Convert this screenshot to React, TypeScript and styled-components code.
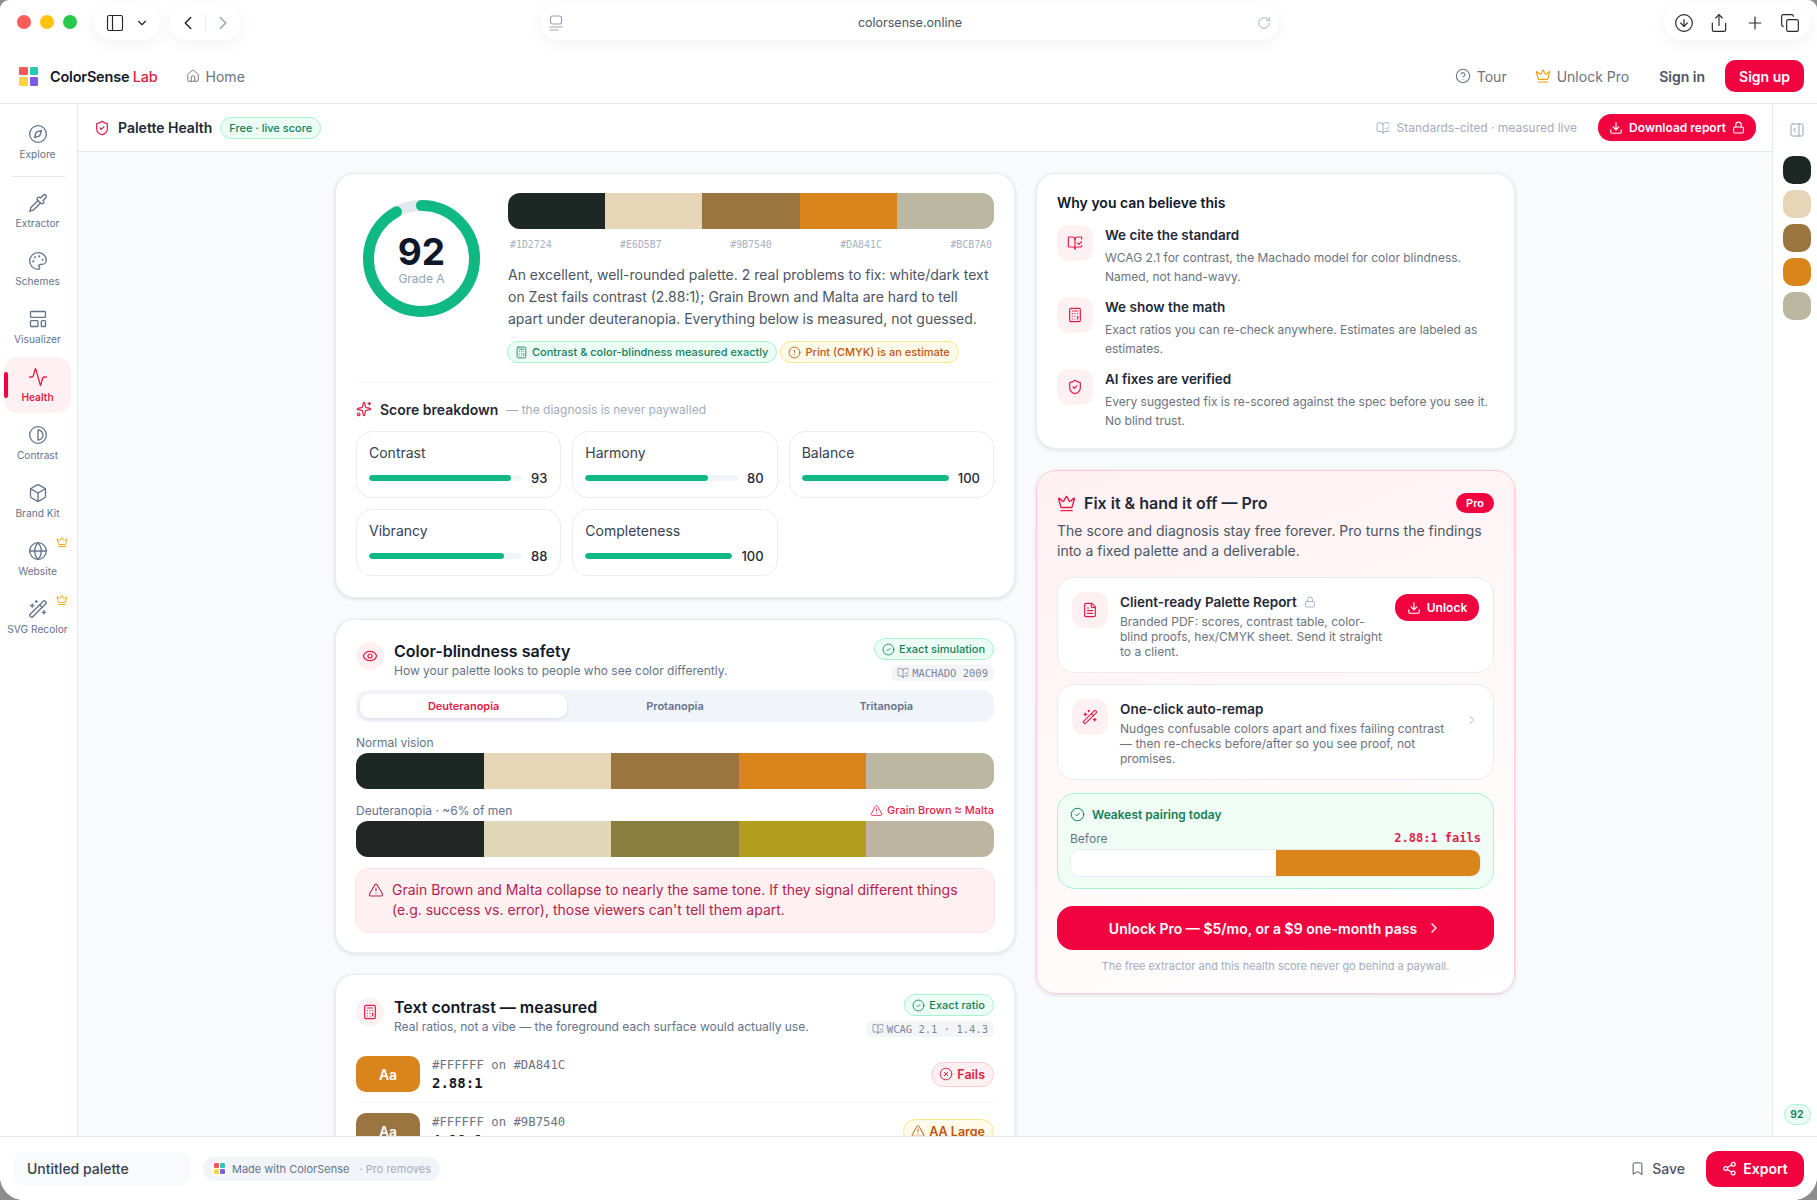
import React from "react";
import styled, { createGlobalStyle } from "styled-components";
import {
  Activity, BookOpenCheck, Bookmark, Box, Calculator, ChevronDown, ChevronLeft, ChevronRight,
  CircleAlert, CircleArrowDown, CircleCheck, CircleHelp, CircleX, Compass, Contrast, Copy,
  Crown, Download, Eye, FileText, Globe, House, LayoutTemplate, Lock, PanelLeft, PanelRightOpen,
  Palette, Pipette, Plus, RotateCw, Share, Share2, ShieldCheck, Sparkles, TriangleAlert, WandSparkles,
} from "lucide-react";

const RED = "#f0033f";
const ROSE = "#e11d48";
const GREEN_TEXT = "#15805a";
const MONO = `"DejaVu Sans Mono", "Liberation Mono", monospace`;

const palette = ["#1D2724", "#E6D5B7", "#9B7540", "#DA841C", "#BCB7A0"];
const simulated = ["#232625", "#E0D7B8", "#8B7D40", "#B09E1C", "#BDB5A0"];

const GlobalStyle = createGlobalStyle`
  html, body { margin: 0; height: 100%; background: #8d8d8d; }
  * { box-sizing: border-box; }
  body { font-family: Inter, "Noto Sans", sans-serif; color: #111827; overflow: hidden; }
  #root { height: 100%; }
`;

const Window = styled.div`
  height: 1200px;
  display: flex;
  flex-direction: column;
  background: #fff;
  overflow: hidden;
  border-radius: 9px 9px 24px 24px;
`;

/* browser chrome */
const Chrome = styled.div`
  height: 52px;
  flex: none;
  display: flex;
  align-items: flex-start;
  padding: 5px 7px 0 0;
  color: #27272a;
`;
const Lights = styled.div`
  display: flex;
  gap: 9px;
  padding: 10px 0 0 17px;
  width: 94px;
`;
const Light = styled.span<{ $c: string }>`
  width: 14px;
  height: 14px;
  border-radius: 50%;
  background: ${(p) => p.$c};
`;
const Pill = styled.div<{ $w: number }>`
  width: ${(p) => p.$w}px;
  height: 35px;
  flex: none;
  border-radius: 18px;
  background: #fff;
  box-shadow: 0 3px 16px rgba(0, 0, 0, 0.06);
  display: flex;
  align-items: center;
  justify-content: space-between;
  padding: 0 11px;
`;
const NavPill = styled(Pill)`
  margin-left: 10px;
  margin-right: 300px;
  padding: 0 7px;
`;
const UrlPill = styled(Pill)`
  font-size: 12.5px;
  color: #4b5563;
  padding: 0 8px;
`;
const ToolPill = styled(Pill)`
  margin-left: auto;
  padding: 0 10px;
`;
const Sep = styled.span`
  width: 1px;
  height: 18px;
  background: #eef0f3;
`;

/* app header */
const Header = styled.header`
  height: 52px;
  flex: none;
  display: flex;
  align-items: center;
  padding: 0 13px 3px 19px;
  border-bottom: 1px solid #e2e8f0;
`;
const LogoGrid = styled.div<{ $size: number }>`
  width: ${(p) => p.$size}px;
  height: ${(p) => p.$size}px;
  display: grid;
  grid-template-columns: 1fr 1fr;
  gap: ${(p) => (p.$size > 14 ? 2 : 1)}px;
`;
const LogoCell = styled.span<{ $c: string }>`
  background: ${(p) => p.$c};
  border-radius: 1px;
`;
const Brand = styled.div`
  margin-left: 12px;
  font-size: 14.5px;
  font-weight: 600;
  letter-spacing: -0.2px;
  color: #111827;
  span { color: ${ROSE}; font-weight: 500; }
`;
const HeadLink = styled.a<{ $strong?: boolean }>`
  display: flex;
  align-items: center;
  gap: 6px;
  font-size: 14px;
  font-weight: ${(p) => (p.$strong ? 600 : 400)};
  color: ${(p) => (p.$strong ? "#4b5563" : "#6b7280")};
  margin-left: ${(p) => (p.$strong ? "2px" : "0")};
`;
const HomeLink = styled(HeadLink)`
  margin-left: 28px;
`;
const HeadRight = styled.div`
  margin-left: auto;
  display: flex;
  align-items: center;
  gap: 28px;
`;
const SignUp = styled.button`
  height: 32px;
  width: 79px;
  margin-left: -8px;
  border: 0;
  border-radius: 10px;
  background: ${RED};
  color: #fff;
  font: 600 14px Inter, sans-serif;
`;

/* body */
const Body = styled.div`
  flex: 1;
  min-height: 0;
  display: flex;
`;
const Sidebar = styled.nav`
  width: 78px;
  flex: none;
  border-right: 1px solid #e2e8f0;
  padding: 10px 6px 0 4px;
  display: flex;
  flex-direction: column;
`;
const NavItem = styled.div<{ $active?: boolean }>`
  position: relative;
  height: 56px;
  margin-bottom: 2px;
  border-radius: 14px;
  display: flex;
  flex-direction: column;
  align-items: center;
  padding-top: 10px;
  gap: 3px;
  font-size: 10.2px;
  line-height: 14px;
  white-space: nowrap;
  font-weight: ${(p) => (p.$active ? 600 : 400)};
  background: ${(p) => (p.$active ? "#fff1f3" : "transparent")};
  color: ${(p) => (p.$active ? ROSE : "#64748b")};
  svg { flex: none; }
`;
const ActiveBar = styled.span`
  position: absolute;
  left: 0;
  top: 15px;
  bottom: 15px;
  width: 4px;
  border-radius: 3px;
  background: ${RED};
`;
const ProMark = styled.span`
  position: absolute;
  right: 3px;
  top: 5px;
  display: flex;
  color: #f59e0b;
`;
const NavDivider = styled.div`
  height: 1px;
  margin: 4px 6px 6px 8px;
  background: #e2e8f0;
`;
const Center = styled.div`
  flex: 1;
  min-width: 0;
  display: flex;
  flex-direction: column;
  background: #f8fafc;
`;
const SubHeader = styled.div`
  height: 48px;
  flex: none;
  display: flex;
  align-items: center;
  padding: 0 16px 0 16px;
  background: #fff;
  border-bottom: 1px solid #e2e8f0;
`;
const SubTitle = styled.h1`
  margin: 0 8px 0 8px;
  font-size: 14px;
  font-weight: 600;
  color: #1f2937;
`;
const Badge = styled.span<{ $tone: "green" | "amber" | "red" }>`
  display: inline-flex;
  align-items: center;
  gap: 4px;
  height: 22px;
  padding: 0 8px;
  flex: none;
  border-radius: 11px;
  font-size: 11px;
  font-weight: 500;
  white-space: nowrap;
  border: 1px solid ${(p) => ({ green: "#a7f3d0", amber: "#fde68a", red: "#fecdd3" })[p.$tone]};
  background: ${(p) => ({ green: "#ecfdf5", amber: "#fffbeb", red: "#fff1f2" })[p.$tone]};
  color: ${(p) => ({ green: GREEN_TEXT, amber: "#c2540c", red: ROSE })[p.$tone]};
  &:has(svg) { padding: 0 8px 0 7px; }
`;
const SubNote = styled.div`
  margin-left: auto;
  display: flex;
  align-items: center;
  gap: 7px;
  font-size: 12px;
  color: #a3acbd;
`;
const RedButton = styled.button`
  display: inline-flex;
  align-items: center;
  justify-content: center;
  gap: 6px;
  border: 0;
  background: ${RED};
  color: #fff;
  font-family: Inter, sans-serif;
  font-weight: 600;
  white-space: nowrap;
`;
const DownloadButton = styled(RedButton)`
  margin-left: 21px;
  width: 158px;
  height: 27px;
  border-radius: 13px;
  font-size: 12px;
`;
const Scroll = styled.main`
  flex: 1;
  min-height: 0;
  overflow: hidden;
  padding-top: 21px;
  display: grid;
  grid-template-columns: 680px 479px;
  gap: 21px;
  justify-content: center;
  align-items: start;
`;
const Column = styled.div`
  display: flex;
  flex-direction: column;
  gap: 21px;
`;
const Card = styled.section<{ $pad?: string }>`
  background: #fff;
  border: 1px solid #e8edf3;
  border-radius: 20px;
  padding: ${(p) => p.$pad ?? "19px 20px"};
  box-shadow: 0 1px 4px rgba(15, 23, 42, 0.12);
`;

/* score card */
const ScoreTop = styled.div`
  display: flex;
  gap: 21px;
`;
const RingWrap = styled.div`
  position: relative;
  width: 131px;
  height: 124px;
  flex: none;
  padding: 7px 0 0 7px;
`;
const RingText = styled.div`
  position: absolute;
  left: 0;
  right: 0;
  top: 37px;
  display: flex;
  flex-direction: column;
  align-items: center;
  color: #0f172a;
  strong { font-size: 37px; line-height: 44px; font-weight: 700; }
  span { font-size: 12px; line-height: 16px; margin-top: -3px; color: #94a3b8; }
`;
const ScoreInfo = styled.div`
  flex: 1;
  min-width: 0;
`;
const Strip = styled.div`
  height: 36px;
  display: flex;
  border-radius: 12px;
  overflow: hidden;
`;
const Chip = styled.span<{ $c: string }>`
  flex: 1;
  background: ${(p) => p.$c};
`;
const HexRow = styled.div`
  display: flex;
  justify-content: space-between;
  padding: 0 2px;
  margin-top: 10px;
  font-family: ${MONO};
  font-size: 9.9px;
  line-height: 12px;
  color: #aab2c0;
`;
const Summary = styled.p`
  margin: 13px 0 0;
  font-size: 14px;
  line-height: 22px;
  color: #4b5563;
`;
const Chips = styled.div`
  display: flex;
  gap: 3px;
  margin: 11px 0 0 -1px;
`;
const Rule = styled.div`
  height: 1px;
  margin-top: 19px;
  background: #f1f5f9;
`;
const BreakHead = styled.div`
  display: flex;
  align-items: center;
  gap: 8px;
  margin-top: 16px;
  height: 20px;
  font-size: 14px;
  font-weight: 600;
  color: #1f2937;
`;
const BreakNote = styled.span`
  font-size: 12px;
  font-weight: 400;
  color: #a3acbd;
`;
const ScoreGrid = styled.div`
  display: grid;
  grid-template-columns: repeat(3, 1fr);
  gap: 11px 11px;
  margin-top: 12px;
`;
const ScoreCell = styled.div`
  height: 67px;
  border: 1px solid #e8edf3;
  border-radius: 16px;
  padding: 12px 13px 12px 12px;
  font-size: 14px;
  line-height: 18px;
  color: #374151;
`;
const BarRow = styled.div`
  display: flex;
  align-items: center;
  gap: 9px;
  margin-top: 7px;
  font-size: 13px;
  font-weight: 500;
  color: #1f2937;
`;
const Track = styled.div`
  flex: 1;
  height: 6px;
  border-radius: 3px;
  background: #f1f5f9;
  overflow: hidden;
`;
const Fill = styled.div`
  height: 100%;
  border-radius: 3px;
  background: #10b981;
`;

/* section head */
const SectionHead = styled.div`
  display: flex;
  justify-content: space-between;
  gap: 10px;
`;
const SectionLeft = styled.div`
  display: flex;
  gap: 10px;
  padding-top: 3px;
`;
const IconTile = styled.div<{ $size?: number }>`
  width: ${(p) => p.$size ?? 28}px;
  height: ${(p) => p.$size ?? 28}px;
  flex: none;
  display: flex;
  align-items: center;
  justify-content: center;
  border-radius: ${(p) => ((p.$size ?? 28) > 30 ? 12 : 14)}px;
  background: #fff1f3;
  color: ${ROSE};
`;
const SectionTile = styled(IconTile)`
  margin-top: 1px;
`;
const SectionTitle = styled.h2`
  margin: 0;
  font-size: 16px;
  line-height: 20px;
  font-weight: 600;
  color: #111827;
`;
const SectionSub = styled.p`
  margin: 1px 0 0;
  font-size: 12px;
  line-height: 18px;
  color: #64748b;
`;
const Meta = styled.div`
  display: flex;
  flex-direction: column;
  align-items: flex-end;
  gap: 5px;
`;
const Cite = styled.span`
  display: inline-flex;
  align-items: center;
  gap: 3px;
  height: 16px;
  padding: 0 6px;
  border-radius: 6px;
  background: #f3f5f8;
  font-family: ${MONO};
  font-size: 10.5px;
  color: #7c8698;
`;
const Tabs = styled.div`
  display: grid;
  grid-template-columns: repeat(3, 1fr);
  height: 32px;
  padding: 4px 2px;
  margin-top: 9px;
  border-radius: 12px;
  background: #f1f5f9;
`;
const Tab = styled.div<{ $active?: boolean }>`
  display: flex;
  align-items: center;
  justify-content: center;
  margin: 0 2px;
  border-radius: 9px;
  font-size: 11px;
  font-weight: 600;
  color: ${(p) => (p.$active ? ROSE : "#64748b")};
  background: ${(p) => (p.$active ? "#fff" : "transparent")};
  box-shadow: ${(p) => (p.$active ? "0 1px 3px rgba(15,23,42,.12)" : "none")};
`;
const StripLabel = styled.div<{ $top?: number }>`
  display: flex;
  justify-content: space-between;
  align-items: center;
  height: 16px;
  margin: ${(p) => p.$top ?? 12}px 0 3px;
  font-size: 12px;
  color: #64748b;
`;
const ClashNote = styled.span`
  display: inline-flex;
  align-items: center;
  gap: 4px;
  font-size: 11px;
  font-weight: 500;
  color: ${ROSE};
`;
const Alert = styled.div`
  display: flex;
  gap: 8px;
  margin-top: 11px;
  margin-inline: -1px;
  padding: 11px 12px 12px;
  border: 1px solid #ffe4e6;
  border-radius: 14px;
  background: #fff1f2;
  font-size: 14px;
  line-height: 20px;
  color: #b4234e;
  svg { flex: none; margin-top: 2px; }
`;
const RatioRow = styled.div<{ $first?: boolean }>`
  display: flex;
  align-items: center;
  gap: 12px;
  padding: 10px 0;
  margin-top: ${(p) => (p.$first ? "9px" : "0")};
  border-bottom: 1px solid #f1f5f9;
`;
const AaTile = styled.div<{ $c: string }>`
  width: 64px;
  height: 36px;
  flex: none;
  border-radius: 10px;
  display: flex;
  align-items: center;
  justify-content: center;
  background: ${(p) => p.$c};
  color: #fff;
  font-size: 14px;
  font-weight: 600;
`;
const RatioText = styled.div`
  flex: 1;
  font-family: ${MONO};
  font-size: 12.3px;
  line-height: 17px;
  color: #6b7280;
  strong { display: block; font-size: 14px; line-height: 18px; font-weight: 600; color: #111827; }
`;
const GradeBadge = styled(Badge)`
  height: 25px;
  border-radius: 13px;
  font-size: 12.5px;
  font-weight: 600;
`;

/* right column */
const WhyTitle = styled.h3`
  margin: 0 0 12px;
  font-size: 14px;
  line-height: 20px;
  font-weight: 600;
  color: #111827;
`;
const WhyList = styled.div`
  display: flex;
  flex-direction: column;
  gap: 11px;
`;
const WhyRow = styled.div`
  display: flex;
  gap: 12px;
`;
const RowTitle = styled.div`
  font-size: 13.5px;
  line-height: 20px;
  font-weight: 600;
  color: #1f2937;
  display: flex;
  align-items: center;
  gap: 7px;
`;
const WhyText = styled.p`
  margin: 3px 0 0;
  font-size: 12px;
  line-height: 19px;
  color: #6b7280;
`;
const ProCard = styled(Card)`
  border-color: #fecdd3;
  background: linear-gradient(160deg, #fff1f3 0%, #fff7f8 45%, #ffffff 100%);
`;
const ProHead = styled.div`
  display: flex;
  align-items: center;
  gap: 8px;
  height: 24px;
  margin-top: 1px;
  color: ${ROSE};
`;
const ProTitle = styled.h3`
  margin: 0;
  flex: 1;
  font-size: 16px;
  font-weight: 600;
  color: #1f2937;
`;
const ProTag = styled.span`
  width: 38px;
  height: 20px;
  border-radius: 10px;
  background: ${RED};
  color: #fff;
  font-size: 11px;
  font-weight: 600;
  display: flex;
  align-items: center;
  justify-content: center;
`;
const ProText = styled.p`
  margin: 6px 0 16px;
  font-size: 14px;
  line-height: 20px;
  color: #4b5563;
`;
const Offer = styled.div`
  height: 96px;
  display: flex;
  gap: 12px;
  padding: 14px;
  margin-bottom: 11px;
  border: 1px solid #e8edf3;
  border-radius: 18px;
  background: #fff;
`;
const OfferBody = styled.div`
  flex: 1;
  min-width: 0;
`;
const OfferText = styled.p`
  margin: 2px 0 0;
  font-size: 12px;
  line-height: 15px;
  color: #6b7280;
`;
const UnlockButton = styled(RedButton)`
  width: 84px;
  height: 27px;
  margin: 2px 0 0 -2px;
  flex: none;
  border-radius: 13px;
  font-size: 12px;
`;
const OfferChevron = styled.div`
  flex: none;
  color: #cbd5e1;
  margin-top: 12px;
`;
const Weakest = styled.div`
  height: 96px;
  margin-top: 13px;
  padding: 10px 12px 0;
  border: 1px solid #a7f3d0;
  border-radius: 18px;
  background: #f0fdf6;
`;
const WeakestTitle = styled.div`
  display: flex;
  align-items: center;
  gap: 7px;
  height: 20px;
  font-size: 12px;
  font-weight: 600;
  color: ${GREEN_TEXT};
`;
const BeforeRow = styled.div`
  display: flex;
  justify-content: space-between;
  align-items: center;
  height: 16px;
  margin-top: 6px;
  font-size: 12px;
  color: #64748b;
  b { font-family: ${MONO}; font-size: 12px; font-weight: 700; color: ${ROSE}; }
`;
const PairBar = styled.div`
  display: flex;
  height: 28px;
  margin-top: 3px;
  border-radius: 10px;
  border: 1px solid #e8edf3;
  overflow: hidden;
  background: #fff;
`;
const PairHalf = styled.span<{ $c: string }>`
  flex: 1;
  background: ${(p) => p.$c};
`;
const CtaButton = styled(RedButton)`
  width: 100%;
  height: 44px;
  margin-top: 17px;
  gap: 9px;
  border-radius: 16px;
  font-size: 14px;
`;
const FootNote = styled.p`
  margin: 8px 0 0;
  text-align: center;
  font-size: 11px;
  line-height: 16px;
  color: #a3acbd;
`;

/* right rail */
const Rail = styled.aside`
  width: 45px;
  flex: none;
  border-left: 1px solid #e2e8f0;
  display: flex;
  flex-direction: column;
  align-items: center;
  padding: 18px 0 11px 4px;
  color: #94a3b8;
`;
const RailSwatches = styled.div`
  display: flex;
  flex-direction: column;
  gap: 6px;
  margin-top: 18px;
`;
const RailSwatch = styled.span<{ $c: string }>`
  width: 28px;
  height: 28px;
  border-radius: 10px;
  background: ${(p) => p.$c};
`;
const RailScore = styled.span`
  margin-top: auto;
  width: 27px;
  height: 21px;
  border-radius: 11px;
  border: 1px solid #a7f3d0;
  background: #ecfdf5;
  color: ${GREEN_TEXT};
  font-size: 10.5px;
  font-weight: 600;
  display: flex;
  align-items: center;
  justify-content: center;
`;

/* footer */
const Footer = styled.footer`
  height: 64px;
  flex: none;
  display: flex;
  align-items: center;
  padding: 0 13px;
  background: #fff;
  border-top: 1px solid #e2e8f0;
`;
const NameField = styled.div`
  width: 177px;
  height: 34px;
  display: flex;
  align-items: center;
  padding-left: 14px;
  border-radius: 10px;
  background: #f8fafc;
  font-size: 14px;
  font-weight: 500;
  color: #374151;
`;
const MadeWith = styled.div`
  display: flex;
  align-items: center;
  height: 24px;
  margin-left: 13px;
  padding: 0 9px 0 9px;
  gap: 5px;
  border-radius: 12px;
  background: #f1f5f9;
  font-size: 11px;
  color: #64748b;
`;
const MadeNote = styled.span`
  margin-left: 5px;
  color: #a3acbd;
`;
const LogoChip = styled.div`
  padding: 2px;
  background: #fff;
  border-radius: 3px;
`;
const SaveLink = styled.div`
  margin-left: auto;
  display: flex;
  align-items: center;
  gap: 7px;
  font-size: 14px;
  font-weight: 500;
  color: #4b5563;
`;
const ExportButton = styled(RedButton)`
  width: 98px;
  height: 36px;
  margin-left: 21px;
  border-radius: 12px;
  font-size: 14px;
`;

const navItems = [
  { label: "Extractor", icon: Pipette },
  { label: "Schemes", icon: Palette },
  { label: "Visualizer", icon: LayoutTemplate },
  { label: "Health", icon: Activity, active: true },
  { label: "Contrast", icon: Contrast },
  { label: "Brand Kit", icon: Box },
  { label: "Website", icon: Globe, pro: true },
  { label: "SVG Recolor", icon: WandSparkles, pro: true },
];

const scores = [
  ["Contrast", 93],
  ["Harmony", 80],
  ["Balance", 100],
  ["Vibrancy", 88],
  ["Completeness", 100],
] as const;

const reasons = [
  { title: "We cite the standard", icon: BookOpenCheck, text: "WCAG 2.1 for contrast, the Machado model for color blindness. Named, not hand-wavy." },
  { title: "We show the math", icon: Calculator, text: "Exact ratios you can re-check anywhere. Estimates are labeled as estimates." },
  { title: "AI fixes are verified", icon: ShieldCheck, text: "Every suggested fix is re-scored against the spec before you see it. No blind trust." },
];

function Logo({ size }: { size: number }) {
  return (
    <LogoGrid $size={size}>
      <LogoCell $c="#f9565a" />
      <LogoCell $c="#2ec4b6" />
      <LogoCell $c="#ffd23f" />
      <LogoCell $c="#7c5ce7" />
    </LogoGrid>
  );
}

function ReaderIcon() {
  return (
    <svg width="14" height="16" viewBox="0 0 14 16" fill="none" stroke="#9ca3af" strokeWidth="1.2" strokeLinecap="round">
      <rect x="1.5" y="1" width="11" height="8" rx="2" />
      <path d="M1 12h12M1 15h8" />
    </svg>
  );
}

function Ring({ value }: { value: number }) {
  const r = 53;
  const c = 2 * Math.PI * r;
  return (
    <svg width="117" height="117" viewBox="0 0 117 117">
      <circle cx="58.5" cy="58.5" r={r} fill="none" stroke="#e2e8f0" strokeWidth="11" />
      <circle
        cx="58.5"
        cy="58.5"
        r={r}
        fill="none"
        stroke="#10b981"
        strokeWidth="11"
        strokeLinecap="round"
        strokeDasharray={`${(c * value) / 100} ${c}`}
        transform="rotate(-90 58.5 58.5)"
      />
    </svg>
  );
}

function Swatches({ colors }: { colors: string[] }) {
  return (
    <Strip>
      {colors.map((c) => (
        <Chip key={c} $c={c} />
      ))}
    </Strip>
  );
}

export default function App() {
  return (
    <Window>
      <GlobalStyle />
      <Chrome>
        <Lights>
          <Light $c="#fd5b56" />
          <Light $c="#fdc30c" />
          <Light $c="#27c84b" />
        </Lights>
        <Pill $w={66}>
          <PanelLeft size={20} strokeWidth={1.4} />
          <ChevronDown size={14} strokeWidth={2} />
        </Pill>
        <NavPill $w={71}>
          <ChevronLeft size={22} strokeWidth={1.6} />
          <Sep />
          <ChevronRight size={22} strokeWidth={1.6} color="#9ca3af" />
        </NavPill>
        <UrlPill $w={738}>
          <ReaderIcon />
          <span>colorsense.online</span>
          <RotateCw size={14} strokeWidth={1.4} color="#9ca3af" />
        </UrlPill>
        <ToolPill $w={146}>
          <CircleArrowDown size={20} strokeWidth={1.4} />
          <Share size={20} strokeWidth={1.4} />
          <Plus size={20} strokeWidth={1.4} />
          <Copy size={20} strokeWidth={1.4} />
        </ToolPill>
      </Chrome>

      <Header>
        <Logo size={19} />
        <Brand>
          ColorSense <span>Lab</span>
        </Brand>
        <HomeLink>
          <House size={14} strokeWidth={1.6} />
          Home
        </HomeLink>
        <HeadRight>
          <HeadLink>
            <CircleHelp size={16} strokeWidth={1.6} />
            Tour
          </HeadLink>
          <HeadLink>
            <Crown size={16} strokeWidth={1.8} color="#f59e0b" />
            Unlock Pro
          </HeadLink>
          <HeadLink $strong>Sign in</HeadLink>
          <SignUp>Sign up</SignUp>
        </HeadRight>
      </Header>

      <Body>
        <Sidebar>
          <NavItem>
            <Compass size={20} strokeWidth={1.6} />
            Explore
          </NavItem>
          <NavDivider />
          {navItems.map(({ label, icon: Icon, active, pro }) => (
            <NavItem key={label} $active={active}>
              {active && <ActiveBar />}
              {pro && (
                <ProMark>
                  <Crown size={12} strokeWidth={1.8} />
                </ProMark>
              )}
              <Icon size={20} strokeWidth={1.6} />
              {label}
            </NavItem>
          ))}
        </Sidebar>

        <Center>
          <SubHeader>
            <ShieldCheck size={16} strokeWidth={1.8} color={ROSE} />
            <SubTitle>Palette Health</SubTitle>
            <Badge $tone="green">Free · live score</Badge>
            <SubNote>
              <BookOpenCheck size={14} strokeWidth={1.6} />
              Standards-cited · measured live
            </SubNote>
            <DownloadButton>
              <Download size={14} />
              Download report
              <Lock size={13} />
            </DownloadButton>
          </SubHeader>

          <Scroll>
            <Column>
              <Card $pad="19px 20px 21px">
                <ScoreTop>
                  <RingWrap>
                    <Ring value={92} />
                    <RingText>
                      <strong>92</strong>
                      <span>Grade A</span>
                    </RingText>
                  </RingWrap>
                  <ScoreInfo>
                    <Swatches colors={palette} />
                    <HexRow>
                      {palette.map((c) => (
                        <span key={c}>{c}</span>
                      ))}
                    </HexRow>
                    <Summary>
                      An excellent, well-rounded palette. 2 real problems to fix: white/dark text on Zest fails contrast
                      (2.88:1); Grain Brown and Malta are hard to tell apart under deuteranopia. Everything below is
                      measured, not guessed.
                    </Summary>
                    <Chips>
                      <Badge $tone="green">
                        <Calculator size={13} strokeWidth={1.6} />
                        Contrast &amp; color-blindness measured exactly
                      </Badge>
                      <Badge $tone="amber">
                        <CircleAlert size={13} strokeWidth={1.6} />
                        Print (CMYK) is an estimate
                      </Badge>
                    </Chips>
                  </ScoreInfo>
                </ScoreTop>
                <Rule />
                <BreakHead>
                  <Sparkles size={16} strokeWidth={1.8} color={ROSE} />
                  Score breakdown
                  <BreakNote>— the diagnosis is never paywalled</BreakNote>
                </BreakHead>
                <ScoreGrid>
                  {scores.map(([name, value]) => (
                    <ScoreCell key={name}>
                      {name}
                      <BarRow>
                        <Track>
                          <Fill style={{ width: `${value}%` }} />
                        </Track>
                        {value}
                      </BarRow>
                    </ScoreCell>
                  ))}
                </ScoreGrid>
              </Card>

              <Card $pad="18px 20px 19px">
                <SectionHead>
                  <SectionLeft>
                    <SectionTile>
                      <Eye size={16} strokeWidth={1.8} />
                    </SectionTile>
                    <div>
                      <SectionTitle>Color-blindness safety</SectionTitle>
                      <SectionSub>How your palette looks to people who see color differently.</SectionSub>
                    </div>
                  </SectionLeft>
                  <Meta>
                    <Badge $tone="green">
                      <CircleCheck size={13} strokeWidth={1.6} />
                      Exact simulation
                    </Badge>
                    <Cite>
                      <BookOpenCheck size={12} strokeWidth={1.5} />
                      MACHADO 2009
                    </Cite>
                  </Meta>
                </SectionHead>
                <Tabs>
                  <Tab $active>Deuteranopia</Tab>
                  <Tab>Protanopia</Tab>
                  <Tab>Tritanopia</Tab>
                </Tabs>
                <StripLabel>Normal vision</StripLabel>
                <Swatches colors={palette} />
                <StripLabel $top={13}>
                  Deuteranopia · ~6% of men
                  <ClashNote>
                    <TriangleAlert size={13} strokeWidth={1.6} />
                    Grain Brown ≈ Malta
                  </ClashNote>
                </StripLabel>
                <Swatches colors={simulated} />
                <Alert>
                  <TriangleAlert size={16} strokeWidth={1.6} />
                  <span>
                    Grain Brown and Malta collapse to nearly the same tone. If they signal different things (e.g. success
                    vs. error), those viewers can't tell them apart.
                  </span>
                </Alert>
              </Card>

              <Card $pad="19px 20px">
                <SectionHead>
                  <SectionLeft>
                    <SectionTile>
                      <Calculator size={16} strokeWidth={1.8} />
                    </SectionTile>
                    <div>
                      <SectionTitle>Text contrast — measured</SectionTitle>
                      <SectionSub>Real ratios, not a vibe — the foreground each surface would actually use.</SectionSub>
                    </div>
                  </SectionLeft>
                  <Meta>
                    <Badge $tone="green">
                      <CircleCheck size={13} strokeWidth={1.6} />
                      Exact ratio
                    </Badge>
                    <Cite>
                      <BookOpenCheck size={12} strokeWidth={1.5} />
                      WCAG 2.1 · 1.4.3
                    </Cite>
                  </Meta>
                </SectionHead>
                <RatioRow $first>
                  <AaTile $c="#DA841C">Aa</AaTile>
                  <RatioText>
                    #FFFFFF on #DA841C
                    <strong>2.88:1</strong>
                  </RatioText>
                  <GradeBadge $tone="red">
                    <CircleX size={14} strokeWidth={1.6} />
                    Fails
                  </GradeBadge>
                </RatioRow>
                <RatioRow>
                  <AaTile $c="#9B7540">Aa</AaTile>
                  <RatioText>
                    #FFFFFF on #9B7540
                    <strong>4.18:1</strong>
                  </RatioText>
                  <GradeBadge $tone="amber">
                    <TriangleAlert size={14} strokeWidth={1.6} />
                    AA Large
                  </GradeBadge>
                </RatioRow>
              </Card>
            </Column>

            <Column>
              <Card $pad="19px 20px 18px">
                <WhyTitle>Why you can believe this</WhyTitle>
                <WhyList>
                  {reasons.map(({ title, icon: Icon, text }) => (
                    <WhyRow key={title}>
                      <IconTile $size={36}>
                        <Icon size={16} strokeWidth={1.8} />
                      </IconTile>
                      <div>
                        <RowTitle>{title}</RowTitle>
                        <WhyText>{text}</WhyText>
                      </div>
                    </WhyRow>
                  ))}
                </WhyList>
              </Card>

              <ProCard>
                <ProHead>
                  <Crown size={19} strokeWidth={1.8} />
                  <ProTitle>Fix it &amp; hand it off — Pro</ProTitle>
                  <ProTag>Pro</ProTag>
                </ProHead>
                <ProText>The score and diagnosis stay free forever. Pro turns the findings into a fixed palette and a deliverable.</ProText>
                <Offer>
                  <IconTile $size={36}>
                    <FileText size={16} strokeWidth={1.8} />
                  </IconTile>
                  <OfferBody>
                    <RowTitle>
                      Client-ready Palette Report
                      <Lock size={12} strokeWidth={1.6} color="#94a3b8" />
                    </RowTitle>
                    <OfferText>Branded PDF: scores, contrast table, color-blind proofs, hex/CMYK sheet. Send it straight to a client.</OfferText>
                  </OfferBody>
                  <UnlockButton>
                    <Download size={14} />
                    Unlock
                  </UnlockButton>
                </Offer>
                <Offer>
                  <IconTile $size={36}>
                    <WandSparkles size={16} strokeWidth={1.8} />
                  </IconTile>
                  <OfferBody>
                    <RowTitle>One-click auto-remap</RowTitle>
                    <OfferText>Nudges confusable colors apart and fixes failing contrast — then re-checks before/after so you see proof, not promises.</OfferText>
                  </OfferBody>
                  <OfferChevron>
                    <ChevronRight size={14} />
                  </OfferChevron>
                </Offer>
                <Weakest>
                  <WeakestTitle>
                    <CircleCheck size={15} strokeWidth={1.6} />
                    Weakest pairing today
                  </WeakestTitle>
                  <BeforeRow>
                    Before
                    <b>2.88:1 fails</b>
                  </BeforeRow>
                  <PairBar>
                    <PairHalf $c="#ffffff" />
                    <PairHalf $c="#DA841C" />
                  </PairBar>
                </Weakest>
                <CtaButton>
                  Unlock Pro — $5/mo, or a $9 one-month pass
                  <ChevronRight size={16} />
                </CtaButton>
                <FootNote>The free extractor and this health score never go behind a paywall.</FootNote>
              </ProCard>
            </Column>
          </Scroll>
        </Center>

        <Rail>
          <PanelRightOpen size={16} strokeWidth={1.5} />
          <RailSwatches>
            {palette.map((c) => (
              <RailSwatch key={c} $c={c} />
            ))}
          </RailSwatches>
          <RailScore>92</RailScore>
        </Rail>
      </Body>

      <Footer>
        <NameField>Untitled palette</NameField>
        <MadeWith>
          <LogoChip>
            <Logo size={11} />
          </LogoChip>
          Made with ColorSense
          <MadeNote>· Pro removes</MadeNote>
        </MadeWith>
        <SaveLink>
          <Bookmark size={15} strokeWidth={1.6} />
          Save
        </SaveLink>
        <ExportButton>
          <Share2 size={15} />
          Export
        </ExportButton>
      </Footer>
    </Window>
  );
}
